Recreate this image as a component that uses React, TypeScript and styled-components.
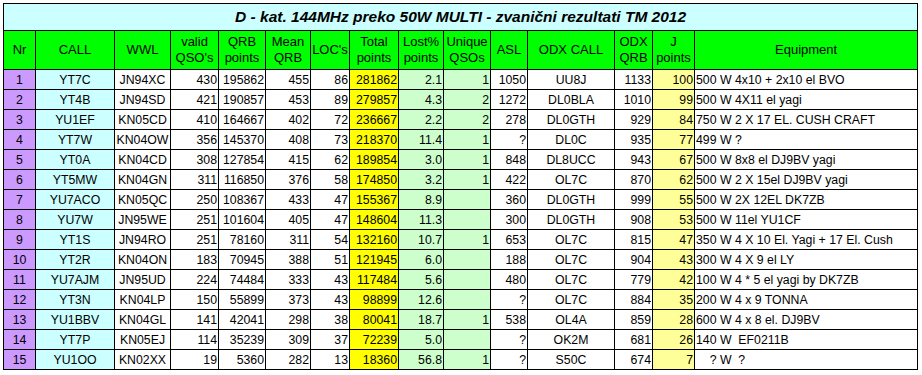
import React from "react";
import styled, { createGlobalStyle } from "styled-components";

const GlobalStyle = createGlobalStyle`
  body {
    margin: 0;
    background: #fff;
    font-family: "Liberation Sans", Arial, sans-serif;
  }
`;

type Align = "left" | "center" | "right";

interface Column {
  title: string[];
  width: number;
  align: Align;
  bg: string;
}

const columns: Column[] = [
  { title: ["Nr"], width: 32, align: "center", bg: "#cc99ff" },
  { title: ["CALL"], width: 79, align: "center", bg: "#ccffff" },
  { title: ["WWL"], width: 56, align: "center", bg: "#fff" },
  { title: ["valid", "QSO's"], width: 48, align: "right", bg: "#fff" },
  { title: ["QRB", "points"], width: 47, align: "right", bg: "#fff" },
  { title: ["Mean", "QRB"], width: 45, align: "right", bg: "#fff" },
  { title: ["LOC's"], width: 39, align: "right", bg: "#fff" },
  { title: ["Total", "points"], width: 49, align: "right", bg: "#ffff00" },
  { title: ["Lost%", "points"], width: 45, align: "right", bg: "#ccffcc" },
  { title: ["Unique", "QSOs"], width: 47, align: "right", bg: "#ccffcc" },
  { title: ["ASL"], width: 37, align: "right", bg: "#fff" },
  { title: ["ODX CALL"], width: 87, align: "center", bg: "#fff" },
  { title: ["ODX", "QRB"], width: 38, align: "right", bg: "#fff" },
  { title: ["J", "points"], width: 42, align: "right", bg: "#ffff99" },
  { title: ["Equipment"], width: 223, align: "left", bg: "#fff" },
];

const rows: string[][] = [
  ["1", "YT7C", "JN94XC", "430", "195862", "455", "86", "281862", "2.1", "1", "1050", "UU8J", "1133", "100", "500 W 4x10 + 2x10 el BVO"],
  ["2", "YT4B", "JN94SD", "421", "190857", "453", "89", "279857", "4.3", "2", "1272", "DL0BLA", "1010", "99", "500 W 4X11 el yagi"],
  ["3", "YU1EF", "KN05CD", "410", "164667", "402", "72", "236667", "2.2", "2", "278", "DL0GTH", "929", "84", "750 W 2 X 17 EL. CUSH CRAFT"],
  ["4", "YT7W", "KN04OW", "356", "145370", "408", "73", "218370", "11.4", "1", "?", "DL0C", "935", "77", "499 W ?"],
  ["5", "YT0A", "KN04CD", "308", "127854", "415", "62", "189854", "3.0", "1", "848", "DL8UCC", "943", "67", "500 W 8x8 el DJ9BV yagi"],
  ["6", "YT5MW", "KN04GN", "311", "116850", "376", "58", "174850", "3.2", "1", "422", "OL7C", "870", "62", "500 W 2 X 15el DJ9BV yagi"],
  ["7", "YU7ACO", "KN05QC", "250", "108367", "433", "47", "155367", "8.9", "", "360", "DL0GTH", "999", "55", "500 W 2X 12EL DK7ZB"],
  ["8", "YU7W", "JN95WE", "251", "101604", "405", "47", "148604", "11.3", "", "300", "DL0GTH", "908", "53", "500 W 11el YU1CF"],
  ["9", "YT1S", "JN94RO", "251", "78160", "311", "54", "132160", "10.7", "1", "653", "OL7C", "815", "47", "350 W 4 X 10 El. Yagi + 17 El. Cush"],
  ["10", "YT2R", "KN04ON", "183", "70945", "388", "51", "121945", "6.0", "", "188", "OL7C", "904", "43", "300 W 4 X 9 el LY"],
  ["11", "YU7AJM", "JN95UD", "224", "74484", "333", "43", "117484", "5.6", "", "480", "OL7C", "779", "42", "100 W 4 * 5 el yagi by DK7ZB"],
  ["12", "YT3N", "KN04LP", "150", "55899", "373", "43", "98899", "12.6", "", "?", "OL7C", "884", "35", "200 W 4 x 9 TONNA"],
  ["13", "YU1BBV", "KN04GL", "141", "42041", "298", "38", "80041", "18.7", "1", "538", "OL4A", "859", "28", "600 W 4 x 8 el. DJ9BV"],
  ["14", "YT7P", "KN05EJ", "114", "35239", "309", "37", "72239", "5.0", "", "?", "OK2M", "681", "26", "140 W  EF0211B"],
  ["15", "YU1OO", "KN02XX", "19", "5360", "282", "13", "18360", "56.8", "1", "?", "S50C", "674", "7", "    ? W  ?"],
];

const Page = styled.div`
  padding: 3px;
`;

const Table = styled.table`
  border-collapse: collapse;
  table-layout: fixed;
  width: 915px;
  color: #000;
  font-size: 12.3px;
`;

const TitleCell = styled.th`
  height: 26px;
  padding: 0;
  background: #ccffff;
  border: 1px solid #000;
  font-size: 15.5px;
  font-weight: bold;
  font-style: italic;
  text-align: center;
  vertical-align: middle;
`;

const HeadCell = styled.th`
  height: 38px;
  padding: 0 1px;
  background: #00ff00;
  border: 1px solid #000;
  font-size: 13px;
  font-weight: normal;
  line-height: 16px;
  text-align: center;
  vertical-align: middle;
`;

const Cell = styled.td<{ $align: Align; $bg: string }>`
  height: 19px;
  padding: ${(p) => (p.$align === "left" ? "0 0 0 1px" : p.$align === "right" ? "0 1px 0 0" : "0")};
  background: ${(p) => p.$bg};
  border: 1px solid #000;
  text-align: ${(p) => p.$align};
  vertical-align: middle;
  white-space: pre;
  overflow: hidden;
  line-height: 16px;
`;

export default function App() {
  return (
    <Page>
      <GlobalStyle />
      <Table>
        <colgroup>
          {columns.map((c, i) => (
            <col key={i} style={{ width: c.width }} />
          ))}
        </colgroup>
        <thead>
          <tr>
            <TitleCell colSpan={columns.length}>
              D - kat. 144MHz preko 50W MULTI - zvanični rezultati TM 2012
            </TitleCell>
          </tr>
          <tr>
            {columns.map((c, i) => (
              <HeadCell key={i}>
                {c.title.map((t, j) => (
                  <div key={j}>{t}</div>
                ))}
              </HeadCell>
            ))}
          </tr>
        </thead>
        <tbody>
          {rows.map((r, i) => (
            <tr key={i}>
              {r.map((v, j) => (
                <Cell key={j} $align={columns[j].align} $bg={columns[j].bg}>
                  {v}
                </Cell>
              ))}
            </tr>
          ))}
        </tbody>
      </Table>
    </Page>
  );
}
